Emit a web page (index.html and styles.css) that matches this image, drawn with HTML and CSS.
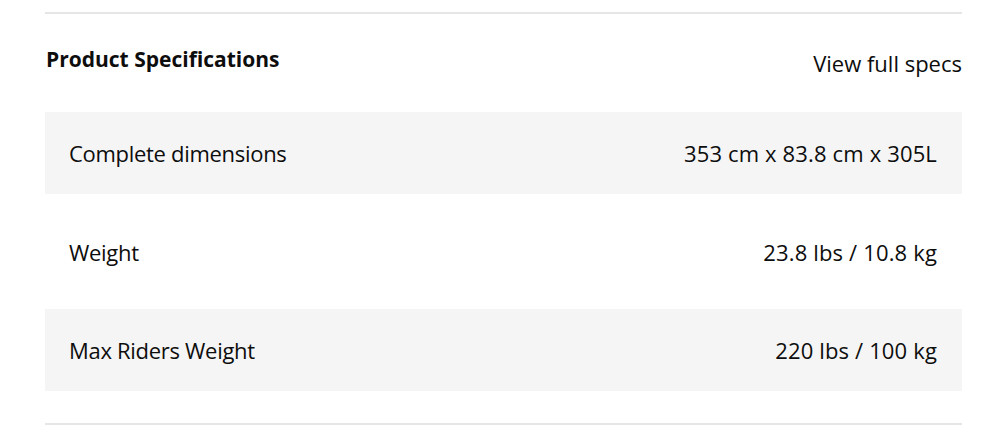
FILE: index.html
```html
<!DOCTYPE html>
<html lang="en">
<head>
<meta charset="utf-8">
<title>Product Specifications</title>
<link rel="stylesheet" href="styles.css">
</head>
<body>
<section class="specs">
  <header class="specs-header">
    <h2 class="specs-title">Product Specifications</h2>
    <a class="specs-link" href="#">View full specs</a>
  </header>
  <div class="specs-table">
    <div class="spec-row spec-row--shaded">
      <span class="spec-label">Complete dimensions</span>
      <span class="spec-value">353 cm x 83.8 cm x 305L</span>
    </div>
    <div class="spec-row spec-row--tall">
      <span class="spec-label">Weight</span>
      <span class="spec-value">23.8 lbs / 10.8 kg</span>
    </div>
    <div class="spec-row spec-row--shaded">
      <span class="spec-label">Max Riders Weight</span>
      <span class="spec-value">220 lbs / 100 kg</span>
    </div>
  </div>
</section>
</body>
</html>
```
FILE: styles.css
```css
html, body {
  margin: 0;
  padding: 0;
  background: #ffffff;
}

body {
  font-family: "Open Sans", "Noto Sans", sans-serif;
  color: #0d0d0d;
}

.specs {
  margin: 12px 0 0 45px;
  width: 917px;
  border-top: 2px solid #e6e6e6;
  border-bottom: 2px solid #e6e6e6;
  padding-bottom: 32px;
}

.specs-header {
  display: flex;
  justify-content: space-between;
  align-items: flex-start;
  height: 98px;
}

.specs-title {
  margin: 31px 0 0 1px;
  font-size: 21px;
  line-height: 28px;
  font-weight: 700;
  letter-spacing: 0;
}

.specs-link {
  margin-top: 34px;
  font-size: 22px;
  line-height: 30px;
  color: #0d0d0d;
  text-decoration: none;
  letter-spacing: 0;
}

.spec-row {
  display: flex;
  justify-content: space-between;
  align-items: center;
  height: 82px;
  padding: 0 25px 0 24px;
  font-size: 22px;
  line-height: 30px;
}

.spec-label {
  letter-spacing: -0.3px;
}

.spec-value {
  letter-spacing: 0.15px;
}

.spec-row--shaded {
  background: #f5f5f5;
}

.spec-row--tall {
  height: 115px;
}
```
